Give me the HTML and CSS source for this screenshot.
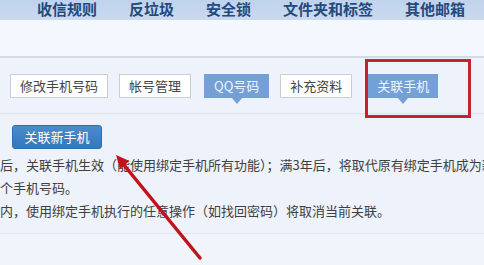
FILE: index.html
```html
<!DOCTYPE html>
<html lang="zh-CN">

<head>
    <meta charset="UTF-8">
    <meta name="viewport" content="width=device-width, initial-scale=1.0">
    <title>关联手机</title>
    <link rel="stylesheet" href="styles.css">
</head>

<body>
    <div class="topnav">
        <span>收信规则</span>
        <span>反垃圾</span>
        <span>安全锁</span>
        <span>文件夹和标签</span>
        <span>其他邮箱</span>
    </div>
    <div class="head-space"></div>

    <div class="tabs">
        <span class="tab">修改手机号码</span>
        <span class="tab">帐号管理</span>
        <span class="tab active tab-qq">QQ号码</span>
        <span class="tab">补充资料</span>
        <span class="tab active tab-phone">关联手机</span>
    </div>

    <div class="content">
        <button type="button" class="btn-bind">关联新手机</button>
        <div class="desc">
            <p>后，关联手机生效（能使用绑定手机所有功能）；满3年后，将取代原有绑定手机成为新</p>
            <p>个手机号码。</p>
            <p>内，使用绑定手机执行的任意操作（如找回密码）将取消当前关联。</p>
        </div>
    </div>
    <div class="footer-space"></div>

    <!-- 标注：红框和箭头 -->
    <div class="mark-box"></div>
    <svg class="mark-arrow" width="484" height="265" viewBox="0 0 484 265">
        <line x1="200" y1="258" x2="124" y2="165" stroke="#c0131c" stroke-width="3.5" stroke-linecap="round" />
        <polygon points="116,155 129.5,161 120,169" fill="#c0131c" />
    </svg>
</body>
</html>
```

FILE: styles.css
```css
* {
    box-sizing: border-box;
}

body {
    margin: 0;
    width: 484px;
    height: 265px;
    overflow: hidden;
    position: relative;
    background-color: #eef2fa;
    font-family: "Noto Sans CJK SC", "Noto Sans", sans-serif;
    font-size: 13px;
    color: #404040;
}

.topnav {
    display: flex;
    gap: 32px;
    height: 20px;
    padding: 1px 0 0 37px;
    background: linear-gradient(#bfd3ec, #c9daef);
    color: #24497d;
    font-size: 15px;
    font-weight: bold;
    line-height: 16px;
    white-space: nowrap;
}

.head-space {
    height: 38px;
    background-color: #f4f7fd;
    border-bottom: 2px solid #d3dae4;
}

.tabs {
    display: flex;
    align-items: flex-start;
    gap: 11px;
    padding: 16px 0 0 10px;
    height: 56px;
    border-bottom: 1px solid #dde3ec;
}

.tab {
    position: relative;
    height: 24px;
    line-height: 22px;
    padding: 0 9px;
    background-color: #fff;
    border: 1px solid #cacdd2;
    color: #444;
    white-space: nowrap;
}

.tab.active {
    background-color: #74a0d6;
    border-color: #74a0d6;
    color: #eef4fc;
}

.tab.active::after {
    content: "";
    position: absolute;
    left: 50%;
    bottom: -7px;
    margin-left: -6px;
    border-left: 6px solid transparent;
    border-right: 6px solid transparent;
    border-top: 7px solid #74a0d6;
}

.tab-qq {
    margin-left: 2px;
}

.tab-phone {
    margin-left: 5px;
    padding: 0 8px;
}

.content {
    padding-top: 11px;
    border-bottom: 1px solid #dfe4ec;
}

.btn-bind {
    display: block;
    margin: 0 0 0 12px;
    width: 90px;
    height: 24px;
    padding: 0;
    border: 1px solid #2f6daf;
    border-radius: 3px;
    background: linear-gradient(#4a8ccd, #3677bd);
    color: #fff;
    font-family: inherit;
    font-size: 13px;
    line-height: 22px;
}

.desc {
    margin: 4px 0 11px;
    white-space: nowrap;
}

.desc p {
    margin: 0;
    line-height: 23px;
}

.footer-space {
    height: 40px;
    background-color: #f1f4fa;
}

.mark-box {
    position: absolute;
    left: 365px;
    top: 59px;
    width: 106px;
    height: 59px;
    border: 3px solid #c3232a;
}

.mark-arrow {
    position: absolute;
    left: 0;
    top: 0;
    pointer-events: none;
}
```
